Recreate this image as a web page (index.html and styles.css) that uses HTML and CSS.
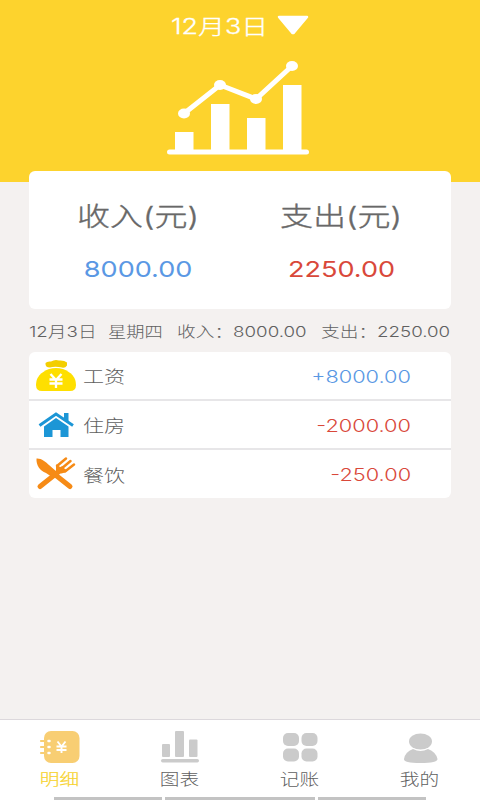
FILE: index.html
```
<!DOCTYPE html>
<html lang="zh-CN">
<head>
<meta charset="utf-8">
<title>记账</title>
<link rel="stylesheet" href="styles.css">
</head>
<body>
<div class="app">
  <header class="hero">
    <div class="date"><span class="wide date-text">12月3日</span>
      <svg class="caret" width="32" height="20" viewBox="0 0 32 20"><path d="M2 2H30L17 17.500Q16 18.500 15 17.500Z" fill="#fff" stroke="#fff" stroke-width="2.500" stroke-linejoin="round"/></svg>
    </div>
    <svg class="chart" width="144" height="96" viewBox="0 0 144 96" fill="#fff">
      <path d="M9 74h18.500v19H9zM45 46h18.500v47H45zM81 60h18.500v33H81zM117 27h18.500v66H117z"/>
      <rect x="1" y="91.500" width="142" height="5" rx="2.500"/>
      <path d="M18 55.500L54 27L90 41L126 8" fill="none" stroke="#fff" stroke-width="5"/>
      <ellipse cx="18" cy="55.500" rx="6" ry="5"/><ellipse cx="54" cy="27" rx="6" ry="5"/><ellipse cx="90" cy="41" rx="6" ry="5"/><ellipse cx="126" cy="8" rx="6" ry="5"/>
    </svg>
  </header>
  <section class="summary">
    <div class="total"><span class="wide label">收入(元)</span><span class="wide value income">8000.00</span></div>
    <div class="total"><span class="wide label">支出(元)</span><span class="wide value expense">2250.00</span></div>
  </section>
  <div class="meta">
    <span class="wide day">12月3日</span><span class="wide week">星期四</span><span class="wide in">收入：8000.00</span><span class="wide out">支出：2250.00</span>
  </div>
  <ul class="list">
    <li>
      <svg class="icon" width="42" height="36" viewBox="0 0 42 36"><path d="M10.500 5Q12 3 16 3.500Q20 1 24 2.500Q29 2 32 4.500V7.500Q30 10.500 27 9.500Q20 8 15 9.500Q10 9.500 10.500 5Z" fill="#f3ce00"/><path d="M14 11Q21 9 28 11Q41 16 41 27Q41 33 35 33H7Q1 33 1 27Q1 16 14 11Z" fill="#fedf00"/><path d="M15.500 16l5.500 6 5.500-6M21 22v8M14.500 21.500h13M14.500 25.500h13" fill="none" stroke="#fff" stroke-width="2.300"/></svg>
      <span class="wide name">工资</span><span class="wide amount income">+8000.00</span>
    </li>
    <li>
      <svg class="icon" width="42" height="36" viewBox="0 0 42 36" fill="#1c96d6"><path d="M4.500 18.500L21 7l17 11.500" fill="none" stroke="#1c96d6" stroke-width="3"/><path d="M29 6h4.500v9.500L29 12.500zM21 11l12.500 8.500V30H25.500v-7h-8v7H9V19.500z"/></svg>
      <span class="wide name">住房</span><span class="wide amount expense">-2000.00</span>
    </li>
    <li>
      <svg class="icon" width="42" height="36" viewBox="0 0 42 36" fill="none" stroke="#f68b16" stroke-linecap="round"><path d="M1.500 2.500C6 2 11 6 14 9L22 16 17 21 11 17C5 15 1 9 1.500 2.500Z" fill="#f68b16" stroke="none"/><path d="M18 17L35 30.500M5 30.500L27 13" stroke-width="5"/><path d="M22 10L31 2.500M26 13L35.500 5M30 15.500L39 8.500" stroke-width="2.500"/><path d="M22 10V15Q27 18 31 14.500L25 12Z" fill="#f68b16" stroke-width="2"/></svg>
      <span class="wide name">餐饮</span><span class="wide amount expense">-250.00</span>
    </li>
  </ul>
  <nav class="tabs">
    <a class="tab active"><svg width="42" height="36" viewBox="0 0 42 36"><rect x="5" y="2" width="35.500" height="32" rx="7" fill="#f8ce73"/><path d="M2 12h6M2 18h6M2 24h6" stroke="#f8ce73" stroke-width="2.200" stroke-linecap="round"/><path d="M9.500 12h1M9.500 18h1M9.500 24h1" stroke="#fff" stroke-width="2.500" stroke-linecap="round"/><path d="M18.500 12.500l4 5 4-5M22.500 17.500v6.500M17.500 17.500h10M17.500 21h10" fill="none" stroke="#fff" stroke-width="1.900"/></svg><span class="wide">明细</span></a>
    <a class="tab"><svg width="42" height="36" viewBox="0 0 42 36" fill="#cbcbcb"><rect x="3" y="15" width="8" height="13" rx="1"/><rect x="16" y="2" width="9" height="26" rx="1"/><rect x="30" y="10.500" width="8.500" height="17.500" rx="1"/><rect x="2" y="30" width="38" height="3.500" rx="1.700"/></svg><span class="wide">图表</span></a>
    <a class="tab"><svg width="42" height="36" viewBox="0 0 42 36" fill="#cbcbcb"><rect x="4" y="4" width="16" height="13" rx="5"/><rect x="22.500" y="4" width="16" height="13" rx="5"/><rect x="4" y="19.500" width="16" height="13" rx="5"/><rect x="22.500" y="19.500" width="16" height="13" rx="5"/></svg><span class="wide">记账</span></a>
    <a class="tab"><svg width="42" height="36" viewBox="0 0 42 36" fill="#cbcbcb"><ellipse cx="21.500" cy="12.500" rx="11.500" ry="8"/><path d="M14 20Q21.500 24 29 20Q37 23 38.500 30Q38.500 34 21.500 34T5 30Q6 23 14 20Z"/></svg><span class="wide">我的</span></a>
  </nav>
  <div class="strip"><i></i><i></i><i></i></div>
</div>
</body>
</html>
```
FILE: styles.css
```
* { box-sizing: border-box; }
body { margin: 0; font-family: Inter, "Noto Sans CJK SC", sans-serif; font-weight: 300; color: #606060; }
.app { width: 480px; height: 800px; background: #f4f1f0; display: flex; flex-direction: column; overflow: hidden; }
svg { display: block; flex: none; }
.wide { display: block; white-space: nowrap; transform: scaleX(1.27); }
.income { color: #5a98e4; }
.expense { color: #d9483a; }

.hero { height: 182px; flex: none; background: #fdd32d; display: flex; flex-direction: column; align-items: center; padding-top: 12px; }
.date { display: flex; align-items: center; justify-content: space-between; height: 28px; width: 138px; color: #fff; margin-right: 1px; }
.date-text { font-size: 21px; line-height: 28px; margin-top: 2px; transform-origin: left; transform: scaleX(1.28); -webkit-text-stroke: 0.3px; }
.caret { margin-top: -2px; }
.chart { margin: 18px 4px 0 0; overflow: visible; }

.summary { height: 138px; flex: none; margin: -11px 29px 0; background: #fff; border-radius: 6px; display: grid; grid-template-columns: 1fr 1fr; padding: 26px 8px 0 8px; }
.total { display: flex; flex-direction: column; align-items: center; }
.label { font-size: 26px; line-height: 40px; color: #686868; -webkit-text-stroke: 0.35px; }
.value { font-size: 22px; line-height: 30px; margin-top: 17px; font-weight: 400; transform: scaleX(1.23); }

.meta { height: 43px; flex: none; padding: 2px 29px 0; display: grid; grid-template-columns: 79px 69px 144px 1fr; align-items: center; font-size: 14.500px; line-height: 20px; }
.meta .wide { transform-origin: left; transform: scaleX(1.29); }
.meta .week { transform: scaleX(1.26); }

.list { list-style: none; margin: 0 29px; padding: 0; background: #fff; border-radius: 6px; height: 146px; flex: none; }
.list li { height: 49px; display: flex; align-items: center; padding: 0 41px 0 6px; border-bottom: 2px solid #e7e6e8; font-size: 17px; }
.list li:last-child { height: 48px; border: 0; }
.name { margin-left: 6px; transform-origin: left; transform: scaleX(1.24); }
.amount { margin: 2px -1px 0 auto; transform-origin: right; transform: scaleX(1.28); }

.tabs { margin-top: auto; height: 78px; flex: none; background: #fff; border-top: 1px solid #dcd8dc; display: grid; grid-template-columns: repeat(4, 1fr); padding-top: 9px; }
.tab { display: flex; flex-direction: column; align-items: center; font-size: 15.500px; line-height: 22px; }
.tab .wide { margin-top: 4px; }
.active { color: #f7d32e; }
.active .wide { -webkit-text-stroke: 0.2px; }
.strip { height: 3px; flex: none; background: #fff; display: flex; gap: 3px; padding-left: 54px; }
.strip i { background: #c3c3c3; width: 108px; }
.strip i:nth-child(2) { width: 150px; }
```
